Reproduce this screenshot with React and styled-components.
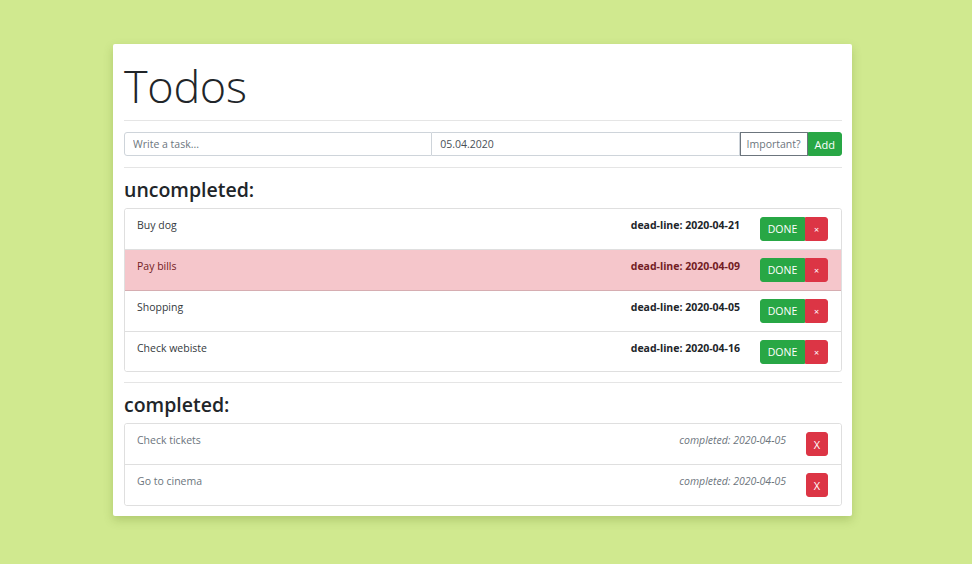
import React from "react";
import styled, { createGlobalStyle } from "styled-components";

const GlobalStyle = createGlobalStyle`
  html, body {
    margin: 0;
    padding: 0;
    background: #d0e98f;
    font-family: "Open Sans", "Noto Sans", sans-serif;
  }
  * { box-sizing: border-box; }
`;

const Page = styled.div`
  width: 972px;
  height: 564px;
  padding-top: 44px;
  display: flex;
  justify-content: center;
  align-items: flex-start;
`;

const Card = styled.div`
  width: 739px;
  margin-left: -7px;
  background: #fff;
  border-radius: 2px;
  padding: 10px 10px 10px 11px;
  box-shadow: 0 4px 10px rgba(80, 110, 20, 0.25);
`;

const Title = styled.h1`
  margin: 4px 0 0 0;
  font-family: "Open Sans", sans-serif;
  font-weight: 300;
  font-size: 45px;
  line-height: 56px;
  color: #212529;
  letter-spacing: -0.3px;
`;

const Rule = styled.hr`
  border: 0;
  border-top: 1px solid rgba(0, 0, 0, 0.1);
  margin: ${(p) => p.$m || "10px 0"};
`;

const InputGroup = styled.div`
  display: flex;
  height: 24px;
`;

const Field = styled.input`
  flex: 1;
  min-width: 0;
  height: 24px;
  border: 1px solid #ced4da;
  border-left-width: ${(p) => (p.$first ? "1px" : "0")};
  border-radius: ${(p) => (p.$first ? "3px 0 0 3px" : "0")};
  padding: 0 8px;
  font-family: inherit;
  font-size: 10.5px;
  color: #495057;
  outline: none;
  &::placeholder { color: #6c757d; }
`;

const Btn = styled.button`
  height: 24px;
  border: 1px solid ${(p) => p.$border || p.$bg};
  background: ${(p) => p.$bg};
  color: ${(p) => p.$color || "#fff"};
  font-family: inherit;
  font-size: ${(p) => p.$size || "10.5px"};
  padding: 0 ${(p) => p.$pad || "8px"};
  width: ${(p) => p.$w || "auto"};
  border-radius: ${(p) => p.$radius || "0"};
  cursor: pointer;
  display: inline-flex;
  align-items: center;
  justify-content: center;
  line-height: 1;
`;

const Heading = styled.h2`
  margin: 0 0 6px 0;
  font-family: "Open Sans", sans-serif;
  font-weight: 600;
  font-size: 19.5px;
  line-height: 24px;
  color: #212529;
`;

const List = styled.ul`
  list-style: none;
  margin: 0;
  padding: 0;
  border: 1px solid rgba(0, 0, 0, 0.125);
  border-radius: 3px;
  overflow: hidden;
`;

const Row = styled.li`
  display: flex;
  align-items: flex-start;
  height: ${(p) => (p.$last ? (p.$muted ? "40px" : "39px") : "41px")};
  padding: 8px 13px 0 12px;
  border-bottom: ${(p) => (p.$last ? "0" : "1px solid rgba(0, 0, 0, 0.125)")};
  background: ${(p) => (p.$danger ? "#f5c6cb" : "#fff")};
  color: ${(p) => (p.$danger ? "#721c24" : p.$muted ? "#6c757d" : "#343a40")};
  font-size: 10.5px;
`;

const Name = styled.span`
  flex: 1;
  line-height: 16px;
`;

const Meta = styled.span`
  line-height: 16px;
  margin-right: 20px;
  font-weight: ${(p) => (p.$italic ? 400 : 700)};
  font-style: ${(p) => (p.$italic ? "italic" : "normal")};
  color: ${(p) => (p.$italic ? "#6c757d" : p.$danger ? "#721c24" : "#212529")};
`;

const BtnGroup = styled.div`
  display: flex;
`;

const GREEN = "#28a745";
const RED = "#dc3545";

const todos = [
  { name: "Buy dog", deadline: "2020-04-21" },
  { name: "Pay bills", deadline: "2020-04-09", important: true },
  { name: "Shopping", deadline: "2020-04-05" },
  { name: "Check webiste", deadline: "2020-04-16" },
];

const done = [
  { name: "Check tickets", completed: "2020-04-05" },
  { name: "Go to cinema", completed: "2020-04-05" },
];

export default function App() {
  return (
    <>
      <GlobalStyle />
      <Page>
        <Card>
          <Title>Todos</Title>
          <Rule $m="6px 0 11px 0" />
          <InputGroup>
            <Field $first placeholder="Write a task..." />
            <Field defaultValue="05.04.2020" />
            <Btn $bg="#fff" $border="#6c757d" $color="#6c757d" $pad="6px">
              Important?
            </Btn>
            <Btn $bg={GREEN} $radius="0 3px 3px 0" $pad="6px" $size="11px">
              Add
            </Btn>
          </InputGroup>
          <Rule $m="11px 0 10px 0" />
          <Heading>uncompleted:</Heading>
          <List>
            {todos.map((t, i) => (
              <Row key={t.name} $danger={t.important} $last={i === todos.length - 1}>
                <Name>{t.name}</Name>
                <Meta $danger={t.important}>dead-line: {t.deadline}</Meta>
                <BtnGroup>
                  <Btn $bg={GREEN} $w="45px" $radius="3px 0 0 3px" $size="10.5px">
                    DONE
                  </Btn>
                  <Btn $bg={RED} $w="23px" $radius="0 3px 3px 0" $size="9px" $pad="0">
                    ×
                  </Btn>
                </BtnGroup>
              </Row>
            ))}
          </List>
          <Rule $m="10px 0 10px 0" />
          <Heading>completed:</Heading>
          <List>
            {done.map((t, i) => (
              <Row key={t.name} $muted $last={i === done.length - 1}>
                <Name>{t.name}</Name>
                <Meta $italic>completed: {t.completed}</Meta>
                <Btn $bg={RED} $w="22px" $radius="3px" $size="11px" $pad="0">
                  X
                </Btn>
              </Row>
            ))}
          </List>
        </Card>
      </Page>
    </>
  );
}
